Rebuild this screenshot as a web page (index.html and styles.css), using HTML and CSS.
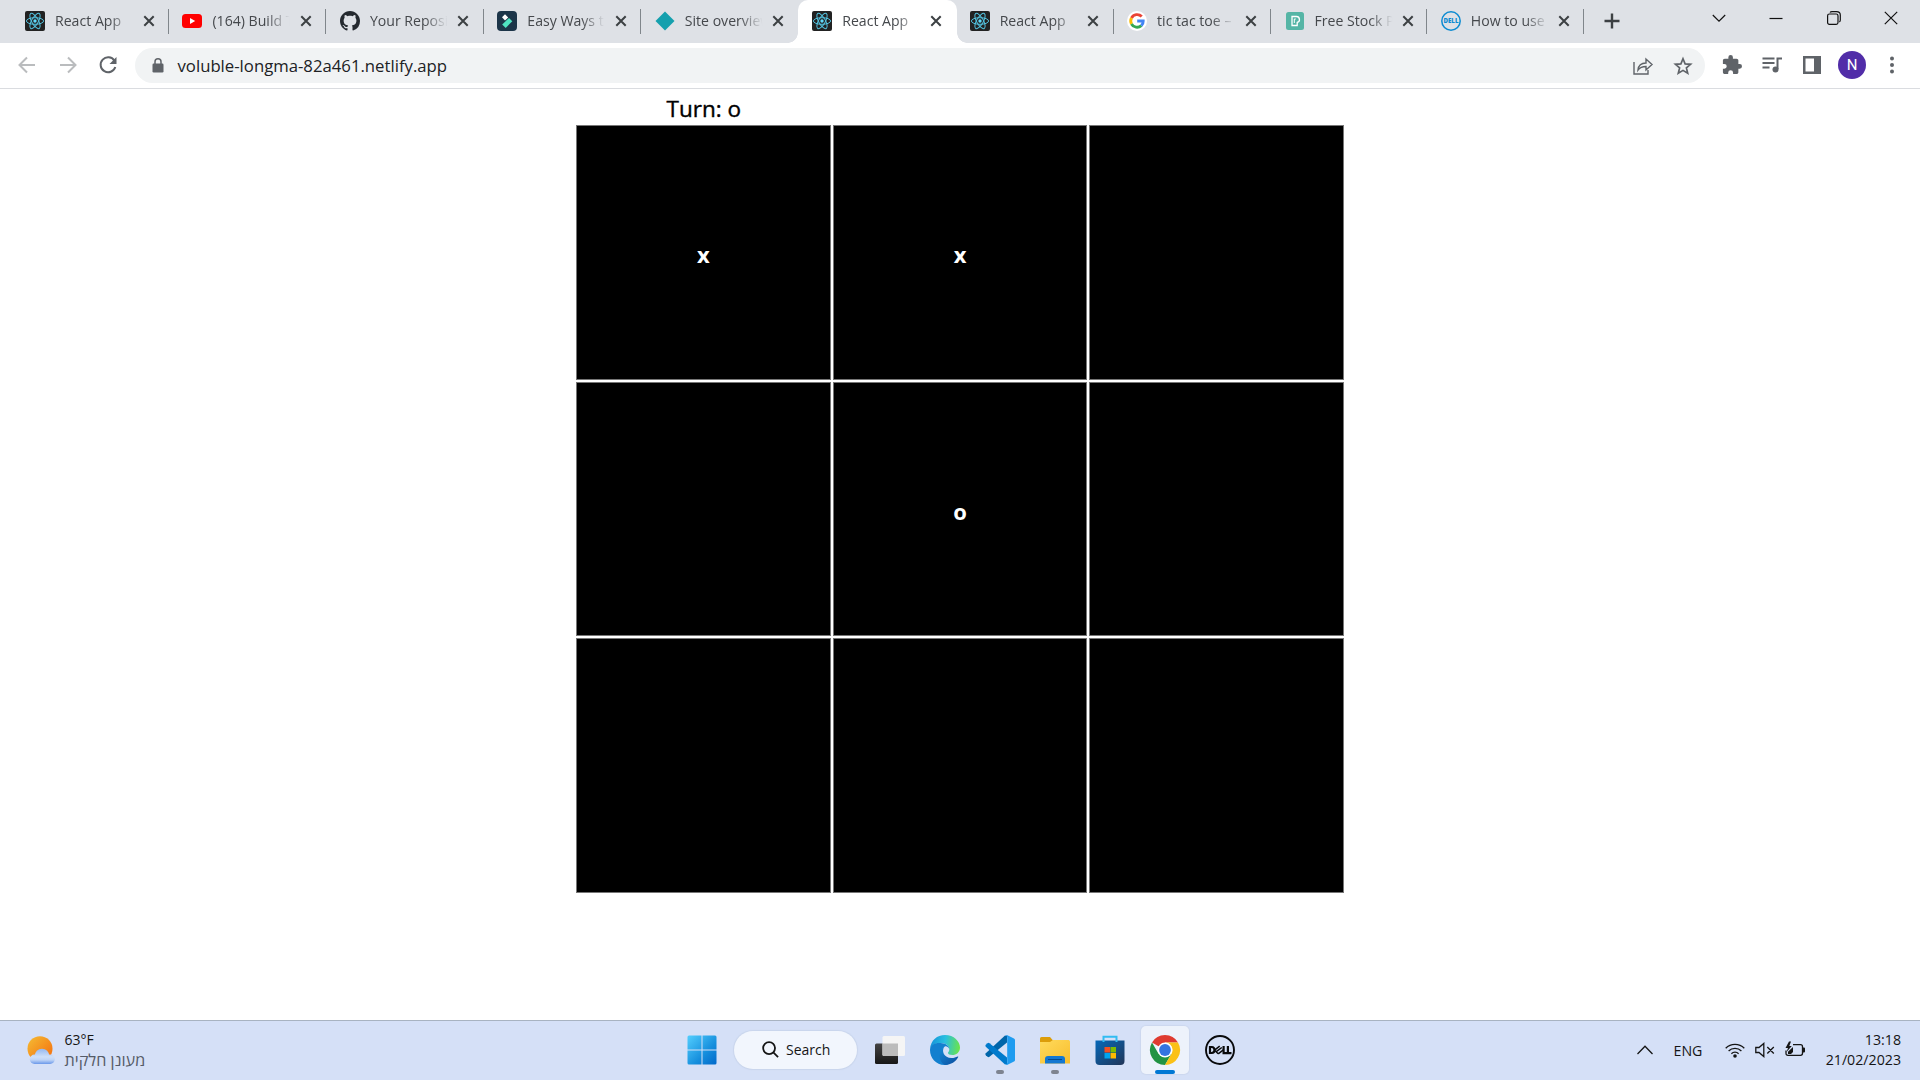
FILE: index.html
```html
<!DOCTYPE html>
<html lang="en">
<head>
<meta charset="utf-8">
<title>React App</title>
<link rel="stylesheet" href="styles.css">
</head>
<body>
<svg class="defs" aria-hidden="true">
  <symbol id="react" viewBox="0 0 20 20"><rect width="20" height="20" rx="2" fill="#222"/><g fill="none" stroke="#53c1de" stroke-width="1"><ellipse cx="10" cy="10" rx="8.6" ry="3.3"/><ellipse cx="10" cy="10" rx="8.6" ry="3.3" transform="rotate(60 10 10)"/><ellipse cx="10" cy="10" rx="8.6" ry="3.3" transform="rotate(120 10 10)"/></g><circle cx="10" cy="10" r="1.7" fill="#61dafb"/></symbol>
  <symbol id="x" viewBox="0 0 12 12"><path d="M1.3 1.3l9.4 9.4M10.700 1.300L1.300 10.700" stroke="#3c4043" stroke-width="2" fill="none"/></symbol>
</svg>

<header class="tabs">
  <div class="tab"><svg class="fav"><use href="#react"/></svg><span class="title">React App</span><svg class="close"><use href="#x"/></svg></div>
  <div class="tab"><svg class="fav" viewBox="0 0 20 20"><rect y="3" width="20" height="14" rx="3.500" fill="#f00"/><path d="M8 7l5.200 3L8 13z" fill="#fff"/></svg><span class="title">(164) Build T</span><svg class="close"><use href="#x"/></svg></div>
  <div class="tab"><svg class="fav" viewBox="0 0 16 16"><path fill="#24292f" d="M8 0C3.580 0 0 3.580 0 8c0 3.540 2.290 6.530 5.470 7.590.4.070.550-.170.550-.380 0-.190-.010-.820-.010-1.490-2.010.370-2.530-.490-2.690-.940-.090-.230-.480-.940-.820-1.130-.280-.150-.680-.520-.010-.530.630-.010 1.080.580 1.230.820.720 1.210 1.870.870 2.330.660.070-.520.280-.870.510-1.070-1.780-.2-3.640-.890-3.640-3.950 0-.870.310-1.590.820-2.150-.080-.2-.360-1.020.080-2.120 0 0 .670-.210 2.200.820.640-.180 1.320-.270 2-.270s1.360.090 2 .270c1.530-1.040 2.200-.820 2.200-.820.440 1.100.160 1.920.080 2.120.510.560.820 1.270.820 2.150 0 3.070-1.870 3.750-3.650 3.950.290.250.540.730.540 1.480 0 1.070-.010 1.930-.010 2.200 0 .210.150.460.550.380A8.010 8.010 0 0 0 16 8c0-4.420-3.580-8-8-8z"/></svg><span class="title">Your Reposit</span><svg class="close"><use href="#x"/></svg></div>
  <div class="tab"><svg class="fav" viewBox="0 0 20 20"><rect width="20" height="20" rx="4" fill="#1c3549"/><path d="M8 3.200l3.200 3.200L8 9.500 5 6.300z" fill="#fff"/><path d="M12 7l3.300 3.300-6.600 6.600-3.500-3.400z" fill="#50e3c2"/></svg><span class="title">Easy Ways to</span><svg class="close"><use href="#x"/></svg></div>
  <div class="tab plain"><svg class="fav" viewBox="0 0 20 20"><path d="M10 .5l9.500 9.500-9.500 9.500L.5 10z" fill="#15a0ae"/></svg><span class="title">Site overview</span><svg class="close"><use href="#x"/></svg></div>
  <div class="tab active plain"><svg class="fav"><use href="#react"/></svg><span class="title">React App</span><svg class="close"><use href="#x"/></svg></div>
  <div class="tab"><svg class="fav"><use href="#react"/></svg><span class="title">React App</span><svg class="close"><use href="#x"/></svg></div>
  <div class="tab"><svg class="fav" viewBox="0 0 20 20"><circle cx="10" cy="10" r="10" fill="#fff"/><g fill="none" stroke-width="2.900"><path d="M14.700 5.600A6.300 6.300 0 0 0 4.500 7" stroke="#ea4335"/><path d="M4.500 7a6.300 6.300 0 0 0 0 6" stroke="#fbbc05"/><path d="M4.500 13a6.300 6.300 0 0 0 9.800 1.600" stroke="#34a853"/><path d="M14.300 14.600A6 6 0 0 0 16.200 10H10.200" stroke="#4285f4"/></g></svg><span class="title">tic tac toe –</span><svg class="close"><use href="#x"/></svg></div>
  <div class="tab short"><svg class="fav" viewBox="0 0 20 20"><rect x="1" y="1" width="18" height="18" rx="2.500" fill="#55b5a6"/><path d="M7 5.500h4.300a3 3 0 0 1 .9 5.900V14.500H7z" fill="none" stroke="#fff" stroke-width="1.300"/><path d="M9.300 12V8h1.500" fill="none" stroke="#fff" stroke-width="1"/></svg><span class="title">Free Stock Ph</span><svg class="close"><use href="#x"/></svg></div>
  <div class="tab short"><svg class="fav" viewBox="0 0 20 20"><circle cx="10" cy="10" r="9.200" fill="none" stroke="#0d8bd1" stroke-width="1.500"/><text x="10" y="12.300" class="dell-mini" textLength="15" lengthAdjust="spacingAndGlyphs">DELL</text></svg><span class="title">How to use</span><svg class="close"><use href="#x"/></svg></div>
  <svg class="newtab" viewBox="0 0 16 16"><path d="M8 .5v15M.5 8h15" stroke="#3c4043" stroke-width="2.400"/></svg>
  <div class="controls">
    <svg viewBox="0 0 14 14"><path d="M.8 4l6.200 6.200L13.200 4" /></svg>
    <svg viewBox="0 0 14 14"><path d="M.5 7.500h13"/></svg>
    <svg viewBox="0 0 14 14"><rect x=".6" y="3" width="10.400" height="10.400" rx="1.800"/><path d="M3 1.500Q3.600.6 5 .6h4.500Q13.300.6 13.300 4v5q0 1.500-1 2"/></svg>
    <svg viewBox="0 0 14 14"><path d="M.8.8l12.400 12.400M13.200.8L.8 13.200"/></svg>
  </div>
</header>

<nav class="toolbar">
  <svg class="nav dim" viewBox="0 0 18 18"><path d="M17 9H2M9 1.500L1.500 9 9 16.500"/></svg>
  <svg class="nav dim" viewBox="0 0 18 18"><path d="M1 9h15M9 1.500L16.500 9 9 16.500"/></svg>
  <svg class="nav" viewBox="0 0 18 18"><path d="M15.400 4.600A7.500 7.500 0 1 0 16.300 11"/><path d="M17.500 1v7h-7z" fill="#5f6368" stroke="none"/></svg>
  <div class="omnibox">
    <svg class="lock" viewBox="0 0 12 15"><rect x=".5" y="5.500" width="11" height="9" rx="1.200" fill="#5f6368"/><path d="M3 6V3.800a3 3 0 0 1 6 0V6" fill="none" stroke="#5f6368" stroke-width="1.500"/></svg>
    <span class="url">voluble-longma-82a461.netlify.app</span>
    <svg class="share" viewBox="0 0 20 20"><path d="M1 6v12h14v-4M5 14c.5-5 3.500-7 8-7V3l6 5.500L13 14v-3.500c-4 0-6 .8-8 3.500z" fill="none" stroke="#5f6368" stroke-width="1.400"/></svg>
    <svg class="star" viewBox="0 0 18 18"><path d="M9 1.800l2.100 5.100 5.500.4-4.200 3.600 1.300 5.400L9 13.400l-4.700 2.900 1.300-5.400L1.400 7.300l5.500-.4z" fill="none" stroke="#5f6368" stroke-width="1.700"/></svg>
  </div>
  <div class="actions">
    <svg viewBox="1 1 22 22"><path fill="#5f6368" d="M20.500 11H19V7c0-1.100-.9-2-2-2h-4V3.500a2.500 2.500 0 0 0-5 0V5H4c-1.100 0-2 .9-2 2v3.800h1.500a2.700 2.700 0 0 1 0 5.400H2V20c0 1.100.9 2 2 2h3.800v-1.500a2.700 2.700 0 0 1 5.400 0V22H17c1.100 0 2-.9 2-2v-4h1.500a2.500 2.500 0 0 0 0-5z"/></svg>
    <svg viewBox="0 0 20 20"><path d="M.5 3.500h12M.5 8h12M.5 12.500h7M15.500 14V3.500H20" fill="none" stroke="#5f6368" stroke-width="2"/><circle cx="13.500" cy="14.500" r="3" fill="#5f6368"/></svg>
    <svg viewBox="0 0 20 20"><path fill="#5f6368" fill-rule="evenodd" d="M1 1h18v18H1zM3.500 3.500v13H12v-13z"/></svg>
    <span class="avatar">N</span>
    <svg viewBox="0 0 20 20"><g fill="#5f6368"><circle cx="10" cy="3.500" r="2"/><circle cx="10" cy="10" r="2"/><circle cx="10" cy="16.500" r="2"/></g></svg>
  </div>
</nav>

<main class="page">
  <div class="game">
    <div class="turn">Turn: o</div>
    <div class="board">
      <div class="cell">x</div><div class="cell">x</div><div class="cell"></div>
      <div class="cell"></div><div class="cell">o</div><div class="cell"></div>
      <div class="cell"></div><div class="cell"></div><div class="cell"></div>
    </div>
  </div>
</main>

<footer class="taskbar">
  <div class="weather">
    <svg viewBox="0 0 28 28"><defs><linearGradient id="sun" x1="0" y1="0" x2="1" y2="1"><stop stop-color="#f5bd34"/><stop offset="1" stop-color="#f46a0c"/></linearGradient><linearGradient id="cloud" gradientUnits="userSpaceOnUse" x1="0" y1="12" x2="0" y2="28"><stop stop-color="#8fb4ef"/><stop offset=".55" stop-color="#cfe0f8"/><stop offset=".75" stop-color="#bdd3f6"/><stop offset="1" stop-color="#6a98ea"/></linearGradient></defs><circle cx="13" cy="12.700" r="12.500" fill="url(#sun)"/><g fill="url(#cloud)"><circle cx="15" cy="20" r="7.300"/><rect x="2.800" y="18.500" width="25" height="9.500" rx="4.700"/></g></svg>
    <div class="lines"><span>63°F</span><span class="sub" lang="he" dir="rtl">מעונן חלקית</span></div>
  </div>
  <div class="apps">
    <div class="app"><svg viewBox="0 0 30 30"><defs><linearGradient id="win" gradientUnits="userSpaceOnUse" x1="0" y1="0" x2="30" y2="30"><stop stop-color="#55d0ff"/><stop offset=".6" stop-color="#168fdd"/><stop offset="1" stop-color="#0067c9"/></linearGradient></defs><path fill="url(#win)" d="M2 .5h12.500v14H.5V2Q.5.500 2 .5zM15.500.5H28q1.500 0 1.500 1.500v12.500h-14zM.5 15.500h14v14H2Q.5 29.500.5 28zM15.500 15.500h14V28q0 1.500-1.500 1.500H15.500z"/></svg></div>
    <div class="search"><svg viewBox="0 0 18 18"><circle cx="7.500" cy="7.500" r="6.300"/><path d="M12 12l5 5"/></svg><span>Search</span></div>
    <div class="app"><svg viewBox="0 0 30 30"><defs><linearGradient id="tv" x1="0" y1="0" x2="0" y2="1"><stop stop-color="#444"/><stop offset="1" stop-color="#171717"/></linearGradient></defs><rect y="8.500" width="23" height="20.500" rx="1.500" fill="url(#tv)"/><rect x="7.500" y="1" width="22.500" height="20" rx="1.500" fill="#f5f5f5"/><path d="M7.500 8.500H23V21H9q-1.500 0-1.500-1.500z" fill="#bcbcbc"/></svg></div>
    <div class="app"><svg viewBox="0 0 30 30"><defs><linearGradient id="e1" x1="0" y1=".3" x2="1" y2=".4"><stop stop-color="#1593d9"/><stop offset=".5" stop-color="#29bfe0"/><stop offset="1" stop-color="#6ae34d"/></linearGradient><linearGradient id="e2" x1="0" y1="0" x2="1" y2="1"><stop stop-color="#148bd8"/><stop offset="1" stop-color="#0c4c9d"/></linearGradient></defs><path d="M0 14C1 5 7 0 15 0c9 0 15 6.500 15 12.500 0 5-4 7.500-7.500 7.500-3 0-4.500-1-4.500-2s1.300-1.500 1.300-3.500c0-4-4-6.500-8-6.500C6 8 1.500 10 0 14z" fill="url(#e1)"/><path d="M0 15C0 10 5 7.500 10.500 8c5 0 8.800 3 8.800 6-1-2.200-3-3-4.500-2.500-5 3-3.500 10 1 13 2.500 1.500 6 1.200 8 .2C21 28.500 18 30 14.500 30 6 30 0 23 0 15z" fill="#1380cf"/><path d="M9.500 20c0-4 2-7 5-8.500-3.500 4.500-.5 11.500 7 11.500 2.500 0 4.500-.7 6-1.500.7-.3 1 .2.600.8C26 26.500 21 30 15 30c-3.500-1.500-5.500-5.500-5.500-10z" fill="url(#e2)"/></svg></div>
    <div class="app running"><svg viewBox="0 0 30 30"><path d="M22 7.500L4.500 21.800q-1 .8-2 0L.8 20.200q-1-1 0-2L20 .5l2 .5z" fill="#0065a9"/><path d="M22 22.500L4.500 8.200q-1-.8-2 0L.8 9.800q-1 1 0 2L20 29.500l2-.5z" fill="#007acc"/><path d="M20.500.3q1-.5 2 0L29 3.400q1 .5 1 1.700v19.800q0 1.200-1 1.700l-6.500 3.100q-1 .5-2 0 1.700-.5 1.700-2V2.300q0-1.500-1.700-2z" fill="#1f9cf0"/></svg></div>
    <div class="app running"><svg viewBox="0 0 30 30"><defs><linearGradient id="fol" x1="0" y1="0" x2="1" y2="1"><stop stop-color="#ffda5c"/><stop offset="1" stop-color="#f8be2d"/></linearGradient></defs><path d="M0 3.500Q0 2 1.500 2H10l3 3.500h16V10H0z" fill="#dc9d0a"/><path d="M0 7h10l3-2h15.500Q30 5 30 6.500v22H0z" fill="url(#fol)"/><path d="M5 28.500V24q0-3 3-3h14q3 0 3 3v4.500z" fill="#1478d1"/><path d="M8 24.500h14" stroke="#064a8d" stroke-width="1"/></svg></div>
    <div class="app"><svg viewBox="0 0 30 30"><defs><linearGradient id="store" x1="0" y1="0" x2="1" y2="1"><stop stop-color="#0669b9"/><stop offset="1" stop-color="#213557"/></linearGradient></defs><path d="M.5 5.500h29V26q0 4-4 4h-21q-4 0-4-4z" fill="url(#store)"/><path d="M8.500 7V1.700h13V7" fill="none" stroke="#32bcf2" stroke-width="2"/><path d="M9.500 12H15v5.500H9.500z" fill="#f25022"/><path d="M15.500 12H21v5.500h-5.500z" fill="#7fba00"/><path d="M9.500 18H15v5.500H9.500z" fill="#00a4ef"/><path d="M15.500 18H21v5.500h-5.500z" fill="#ffb900"/></svg></div>
    <div class="app current"><svg viewBox="0 0 30 30"><path d="M15 15L2 7.500A15 15 0 0 1 28 7.500H15z" fill="#df3b30"/><path d="M2 7.500A15 15 0 0 0 15 30l6.500-11.300L15 15l-6.500 3.700z" fill="#229342"/><path d="M28 7.500A15 15 0 0 1 15 30l6.500-11.300A7.500 7.500 0 0 0 15 7.500z" fill="#fbc116"/><circle cx="15" cy="15" r="7.400" fill="#fff"/><circle cx="15" cy="15" r="5.900" fill="#3474e0"/></svg></div>
    <div class="app"><svg viewBox="0 0 30 30"><circle cx="15" cy="15" r="14" fill="none" stroke="#090a0c" stroke-width="1.900"/><g fill="none" stroke="#090a0c" stroke-width="2.200"><path d="M5 12v6h1.700q2.800-.2 2.800-3t-2.800-3z"/><path d="M9.500 15.200l5.200-4M11.300 16.700l5.500-4.200M13.200 18.900l5.200-4M9.500 15.200l3.700 3.500" stroke-width="1.500"/><path d="M18.600 11v7.200h3.400M22.900 11v7.200H26.500"/></g></svg></div>
  </div>
  <div class="tray">
    <svg class="up" viewBox="0 0 16 10"><path d="M.5 9L8 1.300 15.500 9"/></svg>
    <span class="lang">ENG</span>
    <div class="status">
      <svg viewBox="0 0 20 16"><path d="M.7 6.200a13 13 0 0 1 18.600 0M3.600 9a9 9 0 0 1 12.800 0M6.400 11.700a5 5 0 0 1 7.200 0"/><circle cx="10" cy="14" r="1.800" fill="#151515" stroke="none"/></svg>
      <svg viewBox="0 0 20 16"><path d="M.8 5.500H4L8.800 1.500v13L4 10.500H.8zM12.300 5l6.500 6.500M18.800 5l-6.500 6.500"/></svg>
      <svg viewBox="0 0 20 16"><path d="M8 2.700h7.500q2 0 2 2v6.600q0 2-2 2H3q-2 0-2-2V8.500"/><path d="M18 5.500h1q1 0 1 1v3q0 1-1 1h-1zM4-.5L.5 6H3L1.500 10 6.800 4H4.300L6-.5zM3 12V9.800L8 5v5l-2 2z" fill="#151515" stroke="none"/></svg>
    </div>
    <div class="lines clock"><span>13:18</span><span>21/02/2023</span></div>
  </div>
</footer>
</body>
</html>
```
FILE: styles.css
```css
* { box-sizing: border-box; }
body {
  margin: 0;
  width: 1920px;
  height: 1080px;
  overflow: hidden;
  display: flex;
  flex-direction: column;
  font-family: "Open Sans", "Noto Sans", sans-serif;
  color: #000;
  background: #fff;
}
svg { display: block; flex: none; overflow: visible; }
.defs { position: absolute; width: 0; height: 0; }

/* Tab strip */
.tabs {
  height: 43px;
  flex: none;
  display: flex;
  align-items: center;
  padding-left: 11.500px;
  background: #dee1e6;
}
.tab {
  position: relative;
  width: 157.450px;
  height: 43px;
  flex: none;
  display: flex;
  align-items: center;
  padding: 0 0 1px 13.500px;
}
.tab.short { width: 156.300px; }
.tab::after {
  content: "";
  position: absolute;
  right: 0;
  top: 9px;
  width: 1px;
  height: 25px;
  background: #80868b;
}
.tab.plain::after { display: none; }
.fav { width: 20px; height: 20px; }
.title {
  width: 80px;
  margin-left: 10px;
  padding-bottom: 1px;
  overflow: hidden;
  white-space: nowrap;
  font-size: 14.100px;
  line-height: 20px;
  color: #45484c;
  -webkit-mask-image: linear-gradient(90deg, #000 68%, transparent 97%);
  mask-image: linear-gradient(90deg, #000 68%, transparent 97%);
}
.close { width: 12px; height: 12px; margin-left: 7.500px; }
.active { z-index: 1; }
.active .close, .active .title, .active .fav { position: relative; }
.active::before {
  content: "";
  position: absolute;
  left: -1px;
  right: -.500px;
  top: 0;
  bottom: 0;
  border-radius: 10px 10px 0 0;
  background: #fff;
}
.tab.active::after {
  display: block;
  left: -11px;
  right: -10.500px;
  top: auto;
  bottom: 0;
  width: auto;
  height: 10px;
  background:
    radial-gradient(circle at 0 0, transparent 9.500px, #fff 10px) 0 0 / 10px 10px no-repeat,
    radial-gradient(circle at 100% 0, transparent 9.500px, #fff 10px) 100% 0 / 10px 10px no-repeat;
}
.dell-mini { font: 800 6.500px "Open Sans", sans-serif; fill: #0d8bd1; text-anchor: middle; }
.newtab { width: 16px; height: 16px; margin: 0 0 1px 20px; }
.controls {
  margin: 0 22px 7px auto;
  display: flex;
  gap: 43.500px;
}
.controls svg { width: 14px; height: 14px; fill: none; stroke: #111; stroke-width: 1.200; }

/* Toolbar */
.toolbar {
  height: 46px;
  flex: none;
  display: flex;
  align-items: center;
  padding-left: 18px;
  border-bottom: 1px solid #dadce0;
}
.nav { width: 18px; height: 18px; margin: 0 22.500px 1px 0; fill: none; stroke: #5f6368; stroke-width: 2; }
.nav.dim { stroke: #babcbe; }
.nav:nth-child(3) { margin-right: 18px; }
.omnibox {
  width: 1570px;
  height: 35px;
  flex: none;
  display: flex;
  align-items: center;
  padding: 0 13.500px 0 16.500px;
  border-radius: 18px;
  background: #f1f3f4;
}
.lock { width: 12px; height: 15px; }
.url { margin-left: 14px; margin-right: auto; font-size: 16.730px; line-height: 24px; color: #202124; }
.share { width: 20px; height: 20px; margin-right: 21px; }
.star { width: 18px; height: 18px; }
.actions {
  display: flex;
  align-items: center;
  padding: 0 0 1px 17px;
  gap: 20px;
}
.actions svg { width: 20px; height: 20px; }
.avatar {
  width: 28px;
  height: 28px;
  margin: 0 -4px;
  border-radius: 50%;
  background: #512da8;
  color: #fff;
  font-family: Roboto, sans-serif;
  font-size: 15px;
  line-height: 28px;
  text-align: center;
}

/* Game */
.page { flex: 1; display: flex; justify-content: center; }
.game { width: 768px; }
.turn {
  width: 254.670px;
  height: 36px;
  padding: 4px 0 0 1px;
  text-align: center;
  font-size: 22.500px;
  line-height: 32px;
  -webkit-text-stroke: .4px #000;
}
.board {
  height: 768px;
  display: grid;
  grid-template-columns: repeat(3, 1fr);
  grid-template-rows: repeat(3, 1fr);
  gap: 2px;
}
.cell {
  display: flex;
  align-items: center;
  justify-content: center;
  padding-top: 4px;
  border: 1px solid #767676;
  background: #000;
  color: #fff;
  font-size: 22px;
  line-height: 32px;
  font-weight: 700;
}

/* Taskbar */
.taskbar {
  height: 60px;
  flex: none;
  display: grid;
  grid-template-columns: 674px 1fr auto;
  align-items: center;
  padding-bottom: 2px;
  border-top: 1px solid #a8b3c1;
  background: #d5e0f7;
  font-size: 14px;
  color: #151515;
}
.weather { display: flex; align-items: center; padding-left: 27px; gap: 9.500px; }
.weather svg { width: 28px; height: 28px; }
.lines { display: flex; flex-direction: column; align-items: flex-start; line-height: 20px; }
.sub { font-size: 16.200px; color: #555b67; }
.apps { display: flex; align-items: center; }
.app {
  position: relative;
  width: 55px;
  height: 48px;
  display: flex;
  align-items: center;
  justify-content: center;
}
.app svg { width: 30px; height: 30px; }
.search {
  width: 123px;
  height: 38px;
  margin: 0 5px;
  display: flex;
  align-items: center;
  padding-left: 28px;
  gap: 7px;
  border-radius: 19px;
  background: #f2f6fd;
  box-shadow: 0 0 1px 1px #c9d5ec;
}
.search svg { width: 17px; height: 17px; fill: none; stroke: #151515; stroke-width: 1.900; }
.running::after, .current::after {
  content: "";
  position: absolute;
  bottom: 0;
  width: 8px;
  height: 4px;
  border-radius: 2px;
  background: #7e8490;
}
.current { width: 48px; margin: 0 3.500px; border-radius: 5px; background: #edf2fb; box-shadow: 0 0 1px 1px #cdd8ee; }
.current::after { width: 20px; background: #0078d4; }
.tray { display: flex; align-items: center; padding-right: 19px; }
.up { width: 16px; height: 10px; margin-right: 21px; fill: none; stroke: #151515; stroke-width: 1.300; }
.lang { width: 28px; margin-right: 23.500px; padding-top: 1px; font-size: 14.200px; }
.status { display: flex; gap: 10px; margin-right: 20px; }
.status svg { width: 20px; height: 16px; fill: none; stroke: #151515; stroke-width: 1.300; }
.clock { width: 76px; align-items: flex-end; font-size: 14.200px; }
```
